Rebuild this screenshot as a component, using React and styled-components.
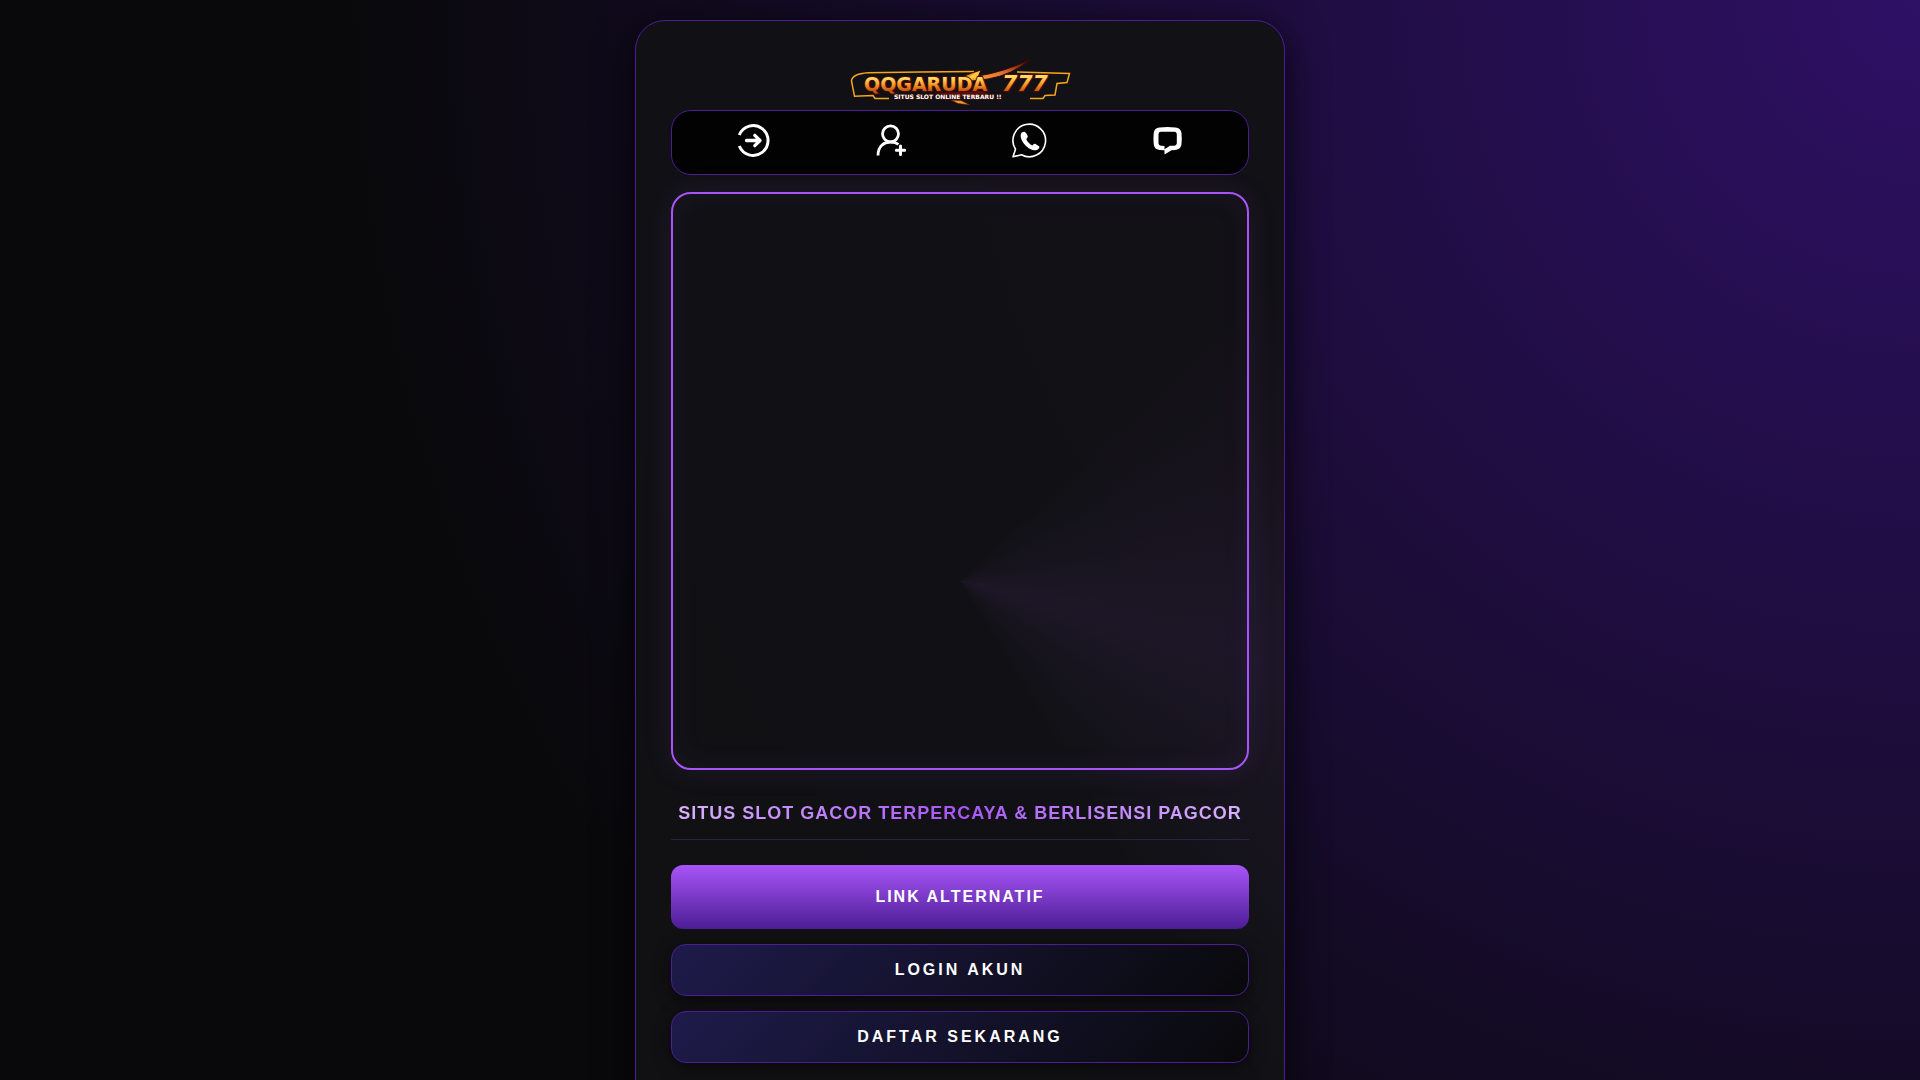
import React from 'react'
import styled, { createGlobalStyle } from 'styled-components';

const Header = () => {
  return (
    <LogoLink href='#home' aria-label='QQGARUDA 777'>
      <Logo viewBox='0 6 240 54' role='img'>
        <defs>
          <linearGradient id='gold' x1='0' y1='0' x2='0' y2='1'>
            <stop offset='0.25' stopColor='#ffd964' />
            <stop offset='0.5' stopColor='#f8a02c' />
            <stop offset='0.8' stopColor='#c9560f' />
          </linearGradient>
          <linearGradient id='wing' x1='0' y1='1' x2='1' y2='0'>
            <stop offset='0' stopColor='#ffb92e' />
            <stop offset='0.5' stopColor='#e07038' />
            <stop offset='0.9' stopColor='#4a0a05' />
          </linearGradient>
        </defs>
        <path d='M134 21.500 L80 22 L28 22.800 Q12 24 11.500 31 L14.500 46.300 L33 45.500 L35 48.500 L49 48.500 M177 22 L229.500 23.500 L227 32.500 L217 33.500 L215 45 L205 45.500 L203 48.500 L190 48.500' fill='none' stroke='#f7a51c' strokeWidth='1.500' />
        <path d='M93 43 L140 41 L150 44 L120 47 Z' fill='#5a0d05' />
        <path d='M116 29.500 L133 22.500 L141 20 L138 26 Q164 22 191 9 Q172 25 148 29 L132 31 Z' fill='url(#wing)' stroke='#3c0904' strokeWidth='1' />
        <path d='M135 23 L140 21 L137 28 L126 29 Z' fill='#ffc93c' />
        <LogoText x='24' y='41' $size={19}>QQGARUDA</LogoText>
        <LogoText x='162' y='41' $size={22} $slant>777</LogoText>
        <path d='M111 50 L121 50.500 L130 55 L118 53.500 Z' fill='#f09a2a' stroke='#5a0d05' strokeWidth='0.600' />
        <LogoTag x='54' y='49'>SITUS SLOT ONLINE TERBARU !!</LogoTag>
      </Logo>
    </LogoLink>
  );
};

const LoginIcon = () => (
  <svg width='36' height='36' viewBox='0 0 36 36' fill='none' stroke='#fff' strokeWidth='3' strokeLinejoin='round'>
    <path d='M4.300 13 A14.900 14.900 0 1 1 4.300 24' />
    <path d='M11.500 18.500 H25 M19.800 13.300 L25 18.500 L19.800 23.700' strokeLinecap='round' strokeWidth='3.300' />
  </svg>
);

const RegisterIcon = () => (
  <svg width='36' height='36' viewBox='0 0 36 36' fill='none' stroke='#fff' strokeWidth='2.800' strokeLinecap='butt'>
    <circle cx='17.500' cy='11.800' r='8' />
    <path d='M5 33.500 C5 24 11 20 17.500 20 C20.500 20 23.500 20.800 25.500 22.300' />
    <path d='M27.500 24 V32.500 M23.300 28.200 H31.700' strokeWidth='3' strokeLinecap='round' />
  </svg>
);

const WhatsappIcon = () => (
  <svg width='36' height='36' viewBox='0 0 36 36'>
    <path d='M2 34.800 L4.500 27.200 A16.300 16.300 0 1 1 10.500 32.800 Z' fill='none' stroke='#fff' strokeWidth='1.600' strokeLinejoin='round' />
    <path d='M11.200 10.300 C12.700 9.300 14.200 9.600 15.200 11.300 L16.700 14.100 C17.200 15.300 15.700 16.300 15.300 17.300 C16.200 19.800 18.700 22.300 21.200 23.500 C22.400 22.700 23.200 21.300 24.500 22 L27.700 24.100 C29.400 25.300 27.700 27.600 25.700 28.100 C21.700 29.300 15.700 25.800 12.200 20.800 C9.700 17.100 8.500 12.300 11.200 10.300 Z' fill='#fff' />
  </svg>
);

const ChatIcon = () => (
  <svg width='36' height='36' viewBox='0 0 36 36'>
    <path fillRule='evenodd' d='M10.500 5.400 Q18.500 4.600 26.500 5.400 Q32 6 32.500 11 Q33 16.500 32.500 22 Q32 27.300 26.500 28 L22.500 28.300 L15.500 32.500 L15.500 28.300 L10.500 28 Q5 27.300 4.700 22 Q4.200 16.500 4.700 11 Q5 6 10.500 5.400 Z M12 9.800 Q9.700 9.900 9.500 12 L9.500 21.500 Q9.700 23.500 12 23.800 L15.500 24 L15.500 27.300 L21 23.800 L25.500 23.800 Q27.500 23.500 27.800 21.500 L27.800 12 Q27.500 9.900 25.500 9.800 Z' fill='#fff' />
  </svg>
);

const App = () => {
  return (
    <>
      <GlobalStyle />
      <Page>
        <Card>
          <Content>
            <Header />
            <Nav>
              <NavLink href='#login' aria-label='Login'><LoginIcon /></NavLink>
              <NavLink href='#daftar' aria-label='Daftar'><RegisterIcon /></NavLink>
              <NavLink href='#whatsapp' aria-label='WhatsApp'><WhatsappIcon /></NavLink>
              <NavLink href='#livechat' aria-label='Live chat'><ChatIcon /></NavLink>
            </Nav>
            <Banner />
            <Title>SITUS SLOT GACOR TERPERCAYA & BERLISENSI PAGCOR</Title>
            <Actions>
              <MainLink href='#alternatif'>LINK ALTERNATIF</MainLink>
              <SubLink href='#login'>LOGIN AKUN</SubLink>
              <SubLink href='#daftar'>DAFTAR SEKARANG</SubLink>
            </Actions>
          </Content>
        </Card>
      </Page>
    </>
  );
};

export default App;

const GlobalStyle = createGlobalStyle`
  * {
    box-sizing: border-box;
  }
  body {
    margin: 0;
    background: #09090b;
    color: white;
    font-family: "Liberation Sans", Arial, sans-serif;
  }
`;
const Page = styled.div`
  display: flex;
  justify-content: center;
  padding: 20px;
  background: radial-gradient(circle at top right, #2e1065 0%, #09090b 70%);
`;
const Card = styled.main`
  position: relative;
  overflow: hidden;
  width: 100%;
  max-width: 650px;
  padding: 35px 35px 78px;
  border: 1px solid #4c1d95;
  border-radius: 30px;
  background: rgba(18, 18, 21, 0.96);
  box-shadow: 0 10px 40px rgba(0, 0, 0, 0.8);

  /* light beam behind the content */
  &::before {
    content: '';
    position: absolute;
    inset: -50%;
    background: conic-gradient(transparent 45deg, rgba(168, 85, 247, 0.08) 105deg, transparent 150deg);
  }
`;
const Content = styled.div`
  position: relative;
`;
const LogoLink = styled.a`
  display: flex;
  justify-content: center;
`;
const Logo = styled.svg`
  width: 240px;
  height: 54px;
`;
const LogoText = styled.text`
  font-family: "DejaVu Sans", sans-serif;
  font-size: ${({ $size }) => $size}px;
  font-weight: bold;
  font-style: ${({ $slant }) => ($slant ? 'italic' : 'normal')};
  fill: url(#gold);
  stroke: #4a0d04;
  stroke-width: 2px;
  paint-order: stroke;
`;
const LogoTag = styled.text`
  font-family: "DejaVu Sans", sans-serif;
  font-size: 6px;
  font-weight: bold;
  fill: white;
  stroke: #4a0d04;
  stroke-width: 1px;
  paint-order: stroke;
`;
const Nav = styled.nav`
  display: flex;
  justify-content: space-around;
  padding: 11px 12px 16px;
  border: 1px solid #4c1d95;
  border-radius: 20px;
  background: #020202;
`;
const NavLink = styled.a`
  display: flex;
`;
const Banner = styled.section`
  aspect-ratio: 1;
  margin: 17px 0 32px;
  border: 2px solid #a855f7;
  border-radius: 20px;
  box-shadow: 0 0 30px rgba(168, 85, 247, 0.1), inset 0 0 30px rgba(168, 85, 247, 0.06);
`;
const Title = styled.h1`
  margin: 0 0 25px;
  padding-bottom: 15px;
  border-bottom: 1px solid rgba(168, 85, 247, 0.2);
  background: linear-gradient(90deg, #d8b4fe, #a855f7, #d8b4fe);
  background-clip: text;
  color: transparent;
  font-size: 18px;
  line-height: 22px;
  letter-spacing: 1px;
  text-align: center;
`;
const Actions = styled.div`
  display: flex;
  flex-direction: column;
  gap: 15px;
`;
const ActionLink = styled.a`
  color: white;
  font-size: 16px;
  font-weight: bold;
  text-align: center;
  text-decoration: none;
`;
const MainLink = styled(ActionLink)`
  padding: 20px;
  border-radius: 12px;
  background: linear-gradient(180deg, #a855f7, #4c1d95);
  line-height: 24px;
  letter-spacing: 2px;
`;
const SubLink = styled(ActionLink)`
  padding: 15px;
  border: 1px solid #4c1d95;
  border-radius: 15px;
  background: linear-gradient(135deg, #1e1b4b, #09090b);
  box-shadow: 0 4px 15px rgba(0, 0, 0, 0.5);
  line-height: 20px;
  letter-spacing: 3px;
`;
